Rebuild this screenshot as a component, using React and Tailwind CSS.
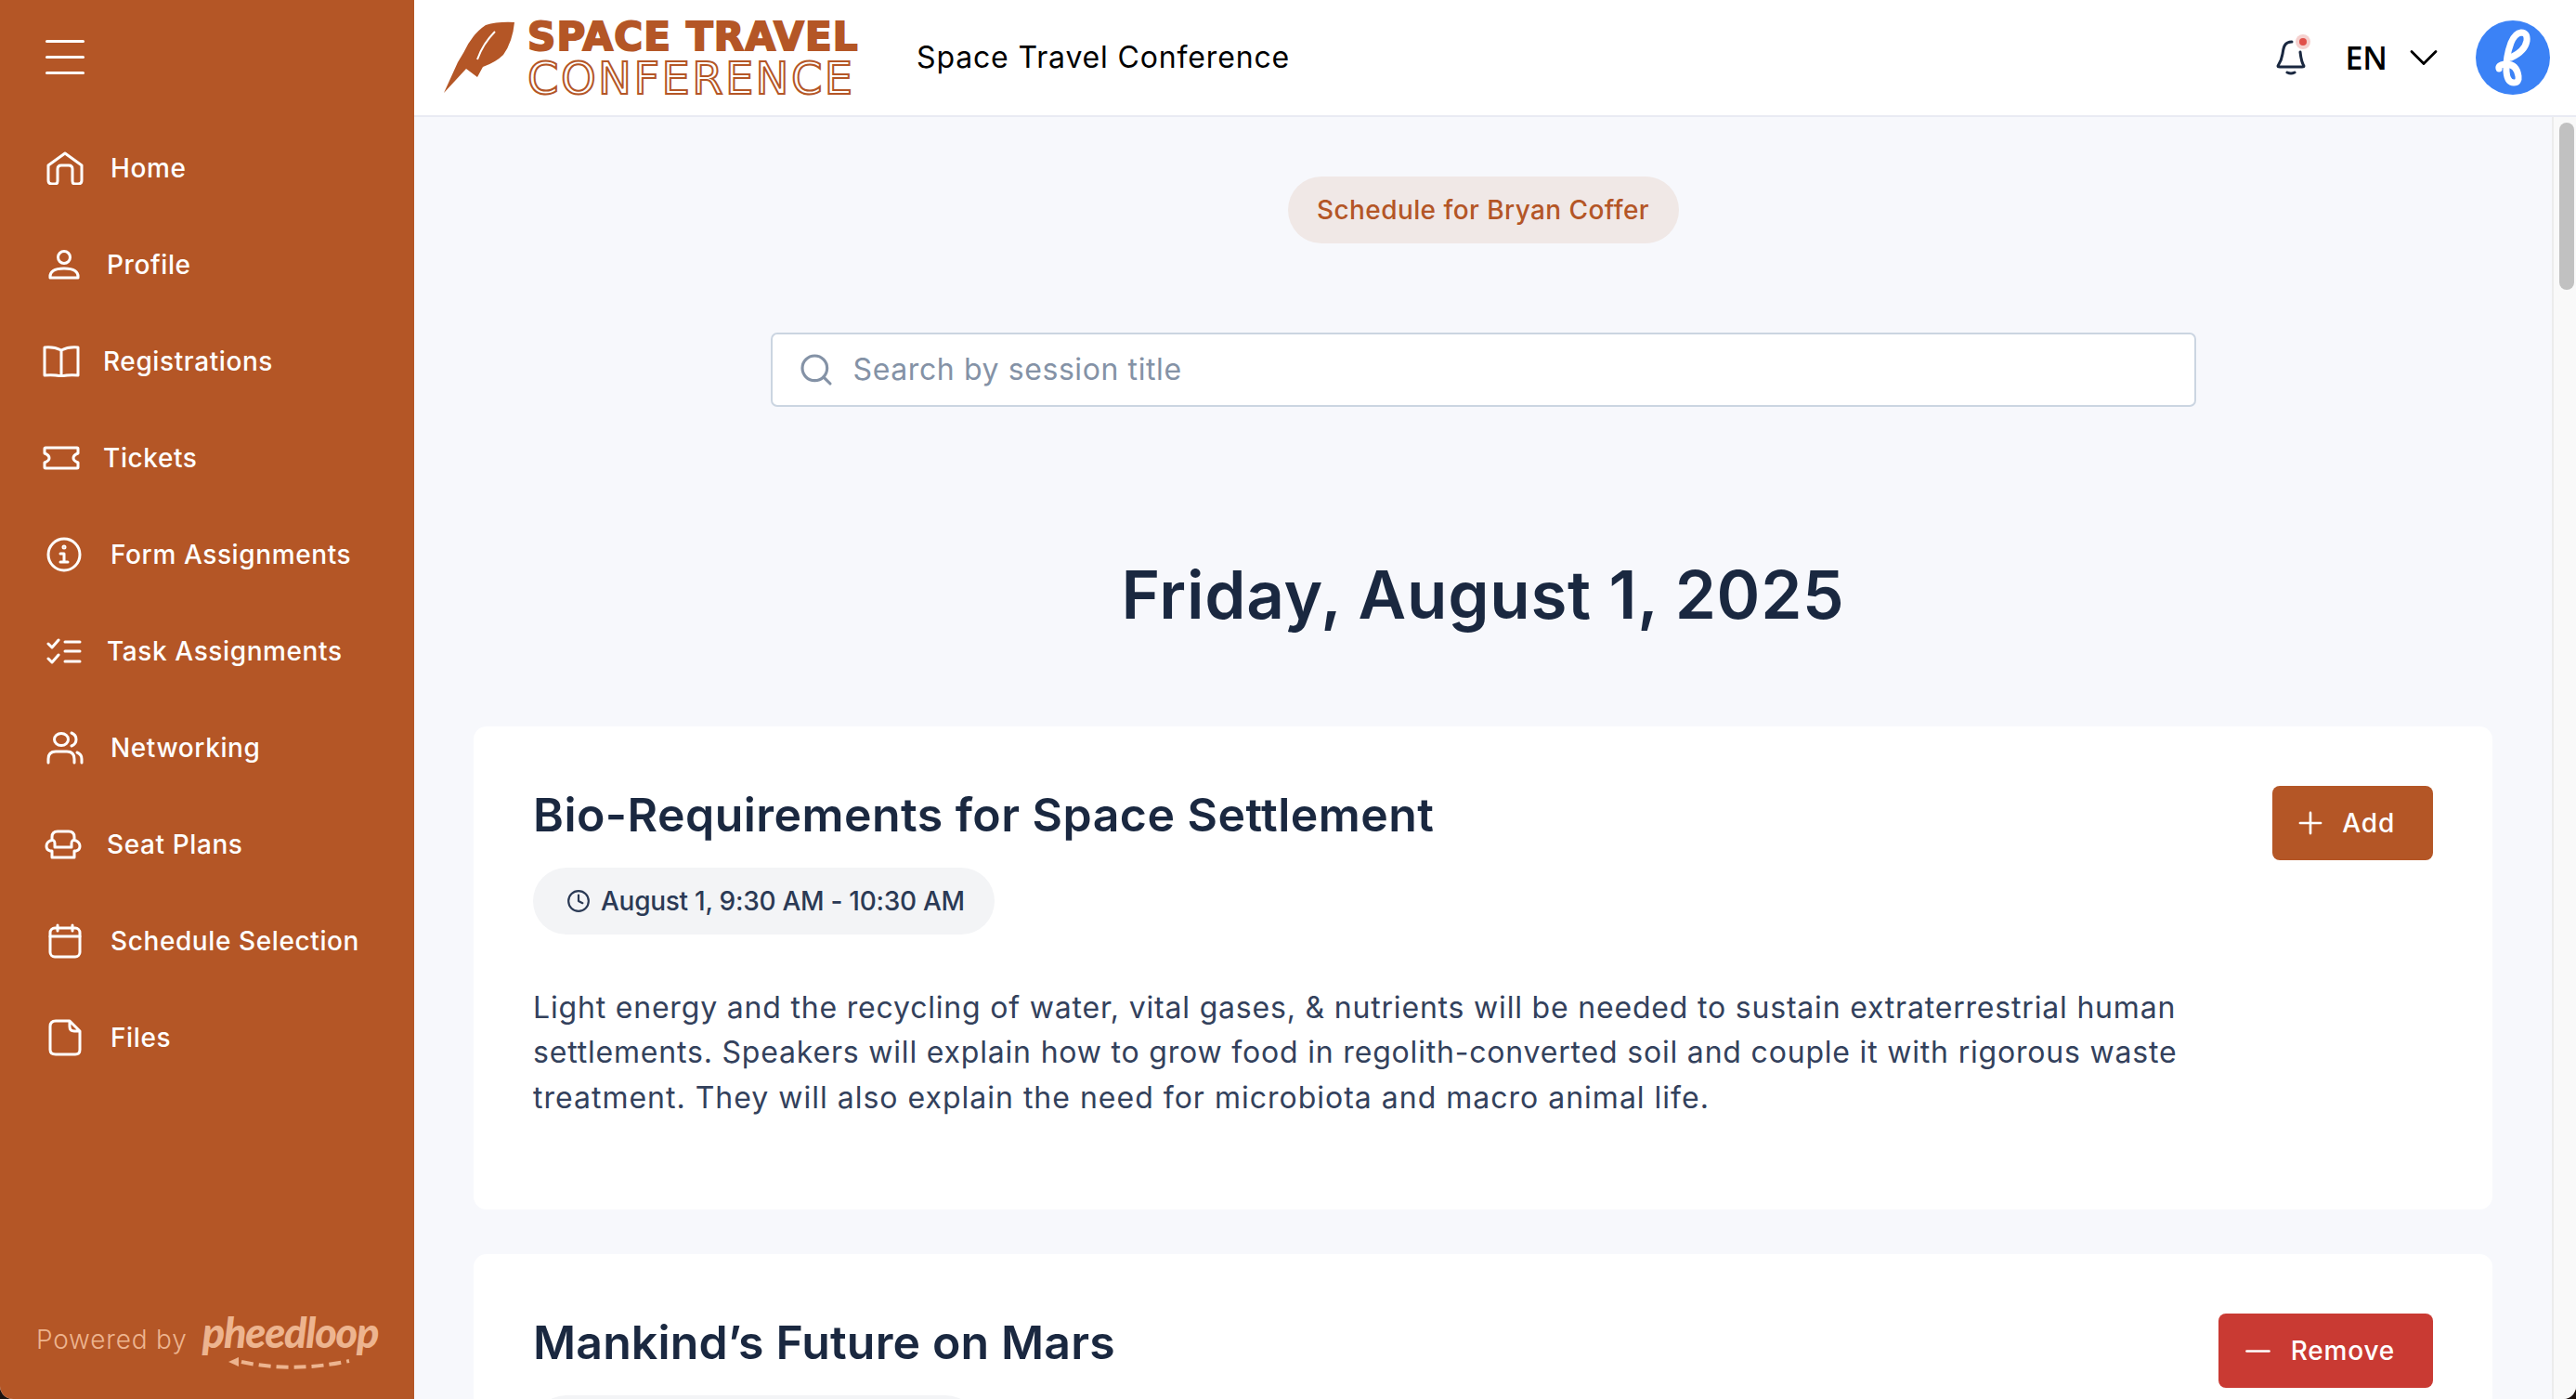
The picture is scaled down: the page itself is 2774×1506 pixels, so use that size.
import React from 'react';
import { ChevronDown, Plus, Minus, Search, Clock } from 'lucide-react';

const sans = 'font-["Inter","Noto_Sans",sans-serif]';

const ic = { fill: 'none', stroke: 'currentColor', strokeWidth: 3, strokeLinecap: 'round', strokeLinejoin: 'round' };

const navItems = [
  {
    label: 'Home', box: 'w-[119px] pl-[50px]',
    icon: <svg width="40" height="36" viewBox="0 0 40 36" {...ic}><path d="M2 15 20 2l18 13v16q0 4-4 4h-3q-3 0-3-3V19q0-4-4-4h-8q-4 0-4 4v13q0 3-3 3H6q-4 0-4-4Z" /></svg>,
  },
  {
    label: 'Profile', box: 'w-[115px] pl-[52px]',
    icon: <svg width="34" height="32" viewBox="0 0 34 32" {...ic}><circle cx="17" cy="8" r="6.5" /><path d="M2 30q-1-10 15-10t15 10Z" /></svg>,
  },
  {
    label: 'Registrations', box: 'w-[111px] pl-[46px]',
    icon: <svg width="40" height="34" viewBox="0 0 40 34" {...ic}><path d="M20 5Q12 1 2 2v30q10-1 18 1 8-2 18-1V2Q28 1 20 5Zm0 0v27" /></svg>,
  },
  {
    label: 'Tickets', box: 'w-[111px] pl-[46px]',
    icon: <svg width="40" height="26" viewBox="0 0 40 26" {...ic}><path d="M3 2h34q1 0 1 1v5q-5 2-5 5t5 5v5q0 1-1 1H3q-1 0-1-1v-5q5-2 5-5T2 8V3q0-1 1-1Z" /></svg>,
  },
  {
    label: 'Form Assignments', box: 'w-[119px] pl-[50px]',
    icon: <svg width="38" height="38" viewBox="0 0 38 38" {...ic}><circle cx="19" cy="19" r="17" /><path d="M19 18v9M15 27h8M15 18h4" /><circle cx="19" cy="11" r="1" /></svg>,
  },
  {
    label: 'Task Assignments', box: 'w-[115px] pl-[50px]',
    icon: <svg width="38" height="30" viewBox="0 0 38 30" {...ic}><path d="m2 7 4 4 7-8M2 23l4 4 7-8M20 5h16M20 15h16M20 26h16" /></svg>,
  },
  {
    label: 'Networking', box: 'w-[119px] pl-[50px]',
    icon: <svg width="40" height="36" viewBox="0 0 40 36" {...ic}><ellipse cx="16" cy="9" rx="7.5" ry="6.5" /><path d="M2 34v-4q0-8 8-8h12q8 0 8 8v4M27 2q5 2 5 7t-5 7M33 23q5 2 5 7v4" /></svg>,
  },
  {
    label: 'Seat Plans', box: 'w-[115px] pl-[48px]',
    icon: <svg width="40" height="32" viewBox="0 0 40 32" {...ic}><path d="M8 11V8q0-6 6-6h12q6 0 6 6v3M8 30v-7H6q-4-1-4-5t4-6q5-2 5 3v4h18v-4q0-5 5-3 4 2 4 6t-4 5h-2v7Z" /></svg>,
  },
  {
    label: 'Schedule Selection', box: 'w-[119px] pl-[52px]',
    icon: <svg width="36" height="38" viewBox="0 0 36 38" {...ic}><rect x="2" y="5" width="32" height="31" rx="5" /><path d="M2 14h32M10 2v6M26 2v6" /></svg>,
  },
  {
    label: 'Files', box: 'w-[119px] pl-[52px]',
    icon: <svg width="36" height="40" viewBox="0 0 36 40" {...ic}><path d="M8 2h15l11 11v20q0 5-5 5H8q-6 0-6-5V8q0-6 6-6ZM23 2v6q0 5 5 5h6" /></svg>,
  },
];

function Sidebar() {
  return (
    <aside className="w-[446px] shrink-0 h-full bg-[#b45626] flex flex-col text-white">
      <div className="pl-[49px] pt-[43px] h-[129px]">
        <div className="w-[42px] flex flex-col gap-[14px]">
          <div className="h-[3px] bg-white rounded-full"></div>
          <div className="h-[3px] bg-white rounded-full"></div>
          <div className="h-[3px] bg-white rounded-full"></div>
        </div>
      </div>
      <nav className="flex flex-col">
        {navItems.map((item) => (
          <div key={item.label} className="h-[104px] flex items-center">
            <div className={`${item.box} shrink-0 flex items-center`}>{item.icon}</div>
            <span className="text-[28px] font-medium tracking-[0.6px] whitespace-nowrap">{item.label}</span>
          </div>
        ))}
      </nav>
      <div className="mt-auto pl-[39px] pb-[32px] flex items-center gap-[16px] text-[#edb48f]">
        <span className="text-[28px] font-light tracking-[0.8px]">Powered by</span>
        <div className="relative w-[190px] h-[64px]">
          <span className={`block text-center font-["Lato",sans-serif] italic font-black text-[45px] leading-[48px] tracking-[-1.2px]`}>pheedloop</span>
          <svg className="absolute left-[28px] bottom-0" width="132" height="16" viewBox="0 0 132 16" fill="none">
            <path d="M0 8l11-5v10Z" fill="currentColor" />
            <path d="M14 8q55 12 116-1" stroke="currentColor" strokeWidth="4" strokeDasharray="13 6" />
          </svg>
        </div>
      </div>
    </aside>
  );
}

function Logo() {
  return (
    <div className="flex items-center ml-[32px] w-[444px] shrink-0">
      <svg width="78" height="78" viewBox="0 0 78 78" fill="#b45626">
        <path d="M76 1Q58 0 45 4 30 14 21 34l-6 10L0 77l24-26 12 9 6-11q14-5 22-13Q74 22 76 1Z" />
        <path d="M55 11Q42 24 36 41" stroke="#fff" strokeWidth="2" fill="none" />
      </svg>
      <div className="ml-[12px] text-[#b45626] font-['DejaVu_Sans',sans-serif] leading-none">
        <div className="text-[42px] font-bold h-[38px] leading-[36px] whitespace-nowrap w-[354px] [-webkit-text-stroke:2px_#b45626] tracking-[1.2px] uppercase">Space Travel</div>
        <div className="mt-[6px] text-[48px] h-[36px] leading-[36px] whitespace-nowrap text-transparent [-webkit-text-stroke:2px_#b45626] tracking-[2.4px] uppercase">Conference</div>
      </div>
    </div>
  );
}

function Header() {
  return (
    <header className="h-[126px] shrink-0 bg-white border-b-2 border-[#e9ebf3] flex items-center">
      <Logo />
      <span className="ml-[65px] text-[32px] tracking-[0.85px] text-black whitespace-nowrap">Space Travel Conference</span>
      <div className="ml-auto flex items-center">
        <div className="relative w-[32px] h-[38px] text-[#1a2840]">
          <svg width="32" height="38" viewBox="0 0 32 38" fill="none" stroke="currentColor" strokeWidth="3" strokeLinecap="round" strokeLinejoin="round">
            <path d="M17 2C9 2 8 8 7 15c-1 7-3 10-5 13 0 1 1 1 2 1h24c1 0 2 0 2-1-2-3-3-6-4-15M12 35q4 2 8 0" />
          </svg>
          <span className="absolute -top-[6px] -right-[5px] w-[16px] h-[16px] rounded-full bg-[#f5d0ce] flex items-center justify-center">
            <span className="w-[8px] h-[8px] rounded-full bg-[#e0504a]"></span>
          </span>
        </div>
        <span className="ml-[42px] text-[34px] font-['Open_Sans',sans-serif] font-semibold text-black">EN</span>
        <ChevronDown className="ml-[13px] text-black" size={52} strokeWidth={1.3} />
        <div className="ml-[30px] mr-[28px] w-[80px] h-[80px] rounded-full bg-[#3b82f6]">
          <svg width="80" height="80" viewBox="0 0 80 80" fill="none" stroke="#fff" strokeWidth="7" strokeLinecap="round" strokeLinejoin="round">
            <path d="M25 52Q24 48 31 47 44 46 46 60 47 67 41 67 34 67 33 55 32 40 38 24 42 14 49 13 56 13 55 22 53 33 38 40" />
          </svg>
        </div>
      </div>
    </header>
  );
}

function SessionCard({ title, titleClass, time, description, added }) {
  return (
    <div className="bg-white rounded-[14px] p-[64px] mb-[48px]">
      <div className="flex justify-between items-start">
        <div className="min-w-0">
          <h3 className={`${titleClass} text-[50px] leading-[62px] font-semibold text-[#1a2840] whitespace-nowrap`}>{title}</h3>
          {time ? (
            <div className="mt-[26px] h-[72px] pl-[36px] pr-[32px] inline-flex items-center gap-[11px] rounded-full bg-[#f3f4f6] text-[#2b3a55]">
              <Clock size={26} strokeWidth={2} />
              <span className="text-[28px] font-medium tracking-[-0.27px] whitespace-nowrap">{time}</span>
            </div>
          ) : (
            <div className="mt-[26px] h-[72px] w-[480px] rounded-full bg-[#f3f4f6]"></div>
          )}
        </div>
        {added ? (
          <button className="h-[80px] w-[231px] pr-[41px] rounded-[8px] bg-[#c93a33] text-white flex items-center justify-end gap-[15px]">
            <Minus size={41} strokeWidth={1.6} />
            <span className="text-[28px] font-medium tracking-[0.8px]">Remove</span>
          </button>
        ) : (
          <button className="h-[80px] w-[173px] pr-[41px] rounded-[8px] bg-[#b45626] text-white flex items-center justify-end gap-[15px]">
            <Plus size={38} strokeWidth={1.7} />
            <span className="text-[28px] font-medium tracking-[0.8px]">Add</span>
          </button>
        )}
      </div>
      <div className="mt-[55px] mb-[32px] text-[32px] leading-[48.4px] tracking-[0.81px] text-[#33415c]">
        {description.map((line) => (
          <div key={line} className="whitespace-nowrap last:tracking-[1px]">{line}</div>
        ))}
      </div>
    </div>
  );
}

export default function App() {
  return (
    <div className="w-full h-screen bg-[#1c120e]">
      <div className={`${sans} w-full h-full flex overflow-hidden rounded-b-[14px] bg-[#f7f8fc]`}>
        <Sidebar />
        <div className="flex-1 min-w-0 h-full flex flex-col">
          <Header />
          <div className="flex-1 min-h-0 flex">
            <main className="flex-1 min-w-0 overflow-hidden px-[64px] pt-[64px]">
              <div className="flex justify-center">
                <div className="h-[72px] w-[421px] rounded-full bg-[#f0e8e6] text-[#b45626] flex items-center justify-center text-[28px] font-medium tracking-[0.42px] whitespace-nowrap">
                  Schedule for Bryan Coffer
                </div>
              </div>
              <div className="mt-[96px] mx-auto w-[1535px] h-[80px] bg-white border-2 border-[#cbd5e1] rounded-[7px] flex items-center pl-[27px] text-[#8492a6]">
                <Search size={40} strokeWidth={1.9} />
                <span className="ml-[20px] text-[32px] tracking-[0.6px]">Search by session title</span>
              </div>
              <h1 className="mt-[149px] mb-[89px] text-center text-[71px] leading-[106px] font-semibold tracking-[0.7px] text-[#1a2840] whitespace-nowrap">
                Friday, August 1, 2025
              </h1>
              <SessionCard
                title="Bio-Requirements for Space Settlement"
                titleClass="tracking-[0.45px]"
                time="August 1, 9:30 AM - 10:30 AM"
                description={[
                  'Light energy and the recycling of water, vital gases, & nutrients will be needed to sustain extraterrestrial human',
                  'settlements. Speakers will explain how to grow food in regolith-converted soil and couple it with rigorous waste',
                  'treatment. They will also explain the need for microbiota and macro animal life.',
                ]}
              />
              <SessionCard title="Mankind’s Future on Mars" titleClass="tracking-[0.15px]" description={[]} added />
            </main>
            <div className="w-[26px] shrink-0 bg-[#f9f9f9] border-l-2 border-[#ececec] pt-[6px] pl-[6px]">
              <div className="w-[16px] h-[180px] rounded-full bg-[#c1c1c1]"></div>
            </div>
          </div>
        </div>
      </div>
    </div>
  );
}
